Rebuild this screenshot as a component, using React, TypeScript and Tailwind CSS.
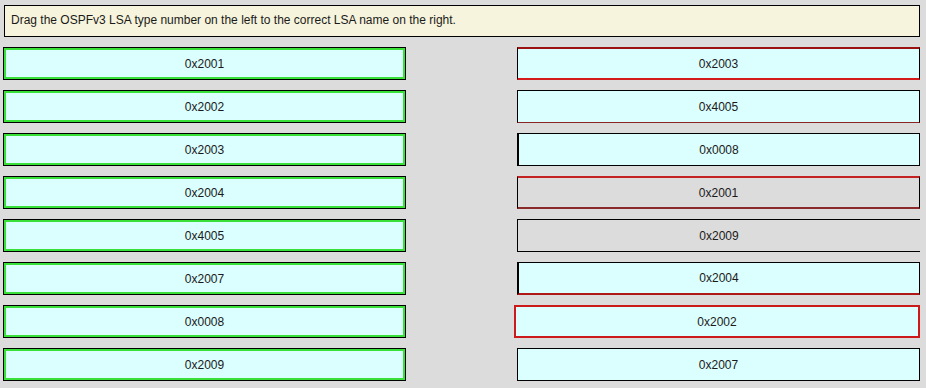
const left = ['0x2001', '0x2002', '0x2003', '0x2004', '0x4005', '0x2007', '0x0008', '0x2009'];

const right = [
  { label: '0x2003', cls: 'bg-[#dbfefe] border-x border-black border-t-2 border-t-[#9c1212] border-b-2 border-b-[#d41a1a]' },
  { label: '0x4005', cls: 'bg-[#dbfefe] border border-black border-b-[#8a2424]' },
  { label: '0x0008', cls: 'bg-[#dbfefe] border border-black border-l-2' },
  { label: '0x2001', cls: 'bg-[#dcdcdc] border-x border-black border-t-2 border-t-[#c42222] border-b-2 border-b-[#8a2a2a]' },
  { label: '0x2009', cls: 'bg-[#dcdcdc] border-l border-y border-black' },
  { label: '0x2004', cls: 'bg-[#dbfefe] border border-black border-l-2 border-b-2 border-b-[#b01818]' },
  { label: '0x2002', cls: 'bg-[#dbfefe] border-2 border-[#cc1a1a] -ml-[3px] w-[406px]' },
  { label: '0x2007', cls: 'bg-[#dbfefe] border border-black' },
];

export default function App() {
  return (
    <div
      className="w-[926px] h-[388px] bg-[#dcdcdc] pt-[5px] pl-[3px] text-[#1a1a1a] overflow-hidden"
      style={{ fontFamily: '"Liberation Sans", Arial, sans-serif' }}
    >
      <div className="ml-[1px] w-[916px] h-[32px] border border-black bg-[#f6f4dc] flex items-center pl-[6px] pb-[2px] text-[12px]">
        Drag the OSPFv3 LSA type number on the left to the correct LSA name on the right.
      </div>

      <div className="flex gap-[111px] mt-[10px]">
        <div className="flex flex-col gap-[10px] w-[403px]">
          {left.map((l) => (
            <div key={l} className="h-[33px] border border-black">
              <div className="h-full border-2 border-[#38e038] bg-[#dbfefe] flex items-center justify-center text-[12px]">
                {l}
              </div>
            </div>
          ))}
        </div>

        <div className="flex flex-col gap-[10px]">
          {right.map((r) => (
            <div
              key={r.label}
              className={`h-[33px] w-[403px] flex items-center justify-center text-[12px] ${r.cls}`}
            >
              {r.label}
            </div>
          ))}
        </div>
      </div>
    </div>
  );
}
